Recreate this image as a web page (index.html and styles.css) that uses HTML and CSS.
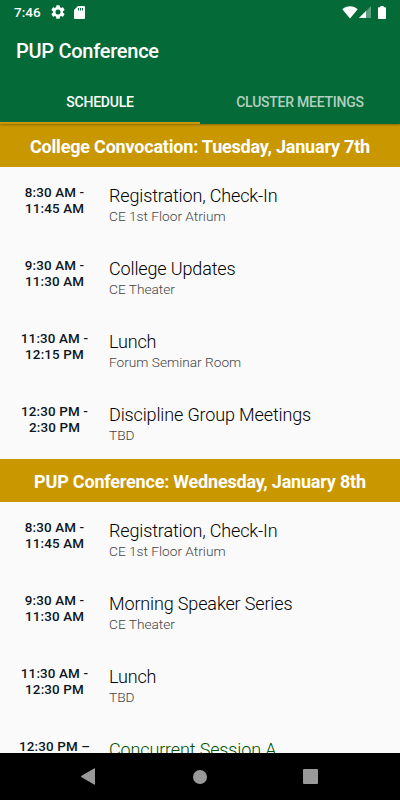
FILE: index.html
```html
<!DOCTYPE html>
<html lang="en">
<head>
    <meta charset="UTF-8">
    <meta name="viewport" content="width=device-width, initial-scale=1.0">
    <title>PUP Conference</title>
    <link rel="stylesheet" href="styles.css">
</head>
<body>

<header class="app-bar">
    <div class="status-bar">
        <span class="clock">7:46</span>
        <svg class="icon-gear" width="14" height="14" viewBox="2 2 20 20">
            <path fill="#fff" d="M19.14 12.94c.04-.3.06-.61.06-.94s-.02-.64-.07-.94l2.03-1.58a.49.49 0 0 0 .12-.61l-1.92-3.32a.49.49 0 0 0-.59-.22l-2.39.96a7 7 0 0 0-1.62-.94l-.36-2.54a.48.48 0 0 0-.48-.41h-3.84a.48.48 0 0 0-.47.41l-.36 2.54c-.59.24-1.13.57-1.62.94l-2.39-.96a.48.48 0 0 0-.59.22L2.74 8.87a.48.48 0 0 0 .12.61l2.03 1.58c-.05.3-.09.63-.09.94s.02.64.07.94l-2.03 1.58a.49.49 0 0 0-.12.61l1.92 3.32c.12.22.37.29.59.22l2.39-.96c.5.38 1.03.7 1.62.94l.36 2.54c.05.24.24.41.48.41h3.84c.24 0 .44-.17.47-.41l.36-2.54a7 7 0 0 0 1.62-.94l2.39.96c.22.08.47 0 .59-.22l1.92-3.32a.48.48 0 0 0-.12-.61zM12 15.6a3.6 3.6 0 1 1 0-7.2 3.6 3.6 0 0 1 0 7.2z"/>
        </svg>
        <svg class="icon-card" width="11" height="13" viewBox="0 0 11 13">
            <path fill="#fff" d="M4 0h6a1 1 0 0 1 1 1v11a1 1 0 0 1-1 1H1a1 1 0 0 1-1-1V4z"/>
            <path stroke="#046a38" stroke-width="1" d="M4.5 2v2.5M6.5 2v2.5M8.5 2v2.5"/>
        </svg>
        <div class="status-right">
            <svg class="icon-wifi" width="16" height="13" viewBox="0 0 16 13">
                <path fill="#fff" d="M8 12.6L.3 3.2C2.4 1.4 5 .3 8 .3s5.6 1.1 7.7 2.9z"/>
            </svg>
            <svg class="icon-signal" width="12" height="12" viewBox="0 0 12 12">
                <path fill="#fff" fill-opacity=".35" d="M0 12L12 0v12z"/>
                <path fill="#fff" d="M0 12l7-7v7z"/>
            </svg>
            <svg class="icon-battery" width="8" height="13" viewBox="0 0 8 13">
                <path fill="#fff" d="M2.3 0h3.4v1.2h1.6q.7 0 .7.7v10.4q0 .7-.7.7H.7q-.7 0-.7-.7V1.9q0-.7.7-.7h1.6z"/>
            </svg>
        </div>
    </div>
    <h1 class="app-title">PUP Conference</h1>
    <nav class="tabs">
        <div class="tab active">SCHEDULE</div>
        <div class="tab">CLUSTER MEETINGS</div>
    </nav>
</header>

<main class="schedule">
    <h2 class="day">College Convocation: Tuesday, January 7th</h2>
    <div class="event">
        <div class="time">8:30 AM -<br>11:45 AM</div>
        <div class="details">
            <div class="name">Registration, Check-In</div>
            <div class="place">CE 1st Floor Atrium</div>
        </div>
    </div>
    <div class="event">
        <div class="time">9:30 AM -<br>11:30 AM</div>
        <div class="details">
            <div class="name">College Updates</div>
            <div class="place">CE Theater</div>
        </div>
    </div>
    <div class="event">
        <div class="time">11:30 AM -<br>12:15 PM</div>
        <div class="details">
            <div class="name">Lunch</div>
            <div class="place">Forum Seminar Room</div>
        </div>
    </div>
    <div class="event">
        <div class="time">12:30 PM -<br>2:30 PM</div>
        <div class="details">
            <div class="name">Discipline Group Meetings</div>
            <div class="place">TBD</div>
        </div>
    </div>

    <h2 class="day">PUP Conference: Wednesday, January 8th</h2>
    <div class="event">
        <div class="time">8:30 AM -<br>11:45 AM</div>
        <div class="details">
            <div class="name">Registration, Check-In</div>
            <div class="place">CE 1st Floor Atrium</div>
        </div>
    </div>
    <div class="event">
        <div class="time">9:30 AM -<br>11:30 AM</div>
        <div class="details">
            <div class="name">Morning Speaker Series</div>
            <div class="place">CE Theater</div>
        </div>
    </div>
    <div class="event">
        <div class="time">11:30 AM -<br>12:30 PM</div>
        <div class="details">
            <div class="name">Lunch</div>
            <div class="place">TBD</div>
        </div>
    </div>
    <div class="event">
        <div class="time">12:30 PM –</div>
        <div class="details">
            <div class="name link">Concurrent Session A</div>
        </div>
    </div>
</main>

<footer class="nav-bar">
    <svg width="14" height="17" viewBox="0 0 14 17">
        <path fill="#999" d="M13 .4q1-.5 1 .6v15q0 1.1-1 .5L.6 9.2q-1-.7 0-1.4z"/>
    </svg>
    <svg width="14" height="14" viewBox="0 0 14 14">
        <circle cx="7" cy="7" r="7" fill="#999"/>
    </svg>
    <svg class="icon-recents" width="15" height="15" viewBox="0 0 15 15">
        <rect width="15" height="15" rx="1" fill="#999"/>
    </svg>
</footer>

</body>
</html>
```

FILE: styles.css
```css
body {
    font-family: Roboto, sans-serif;
    background-color: #fafafa;
    margin: 0;
    display: flex;
    flex-direction: column;
    height: 100vh;
    overflow: hidden;
}

.app-bar {
    background-color: #046a38;
    color: #fff;
    height: 124px;
    flex: none;
    display: flex;
    flex-direction: column;
    z-index: 1;
    box-shadow: 0 1px 2px rgba(0, 0, 0, 0.3);
}

.status-bar {
    display: flex;
    align-items: center;
    flex: none;
    height: 24px;
    padding: 0 14px;
    box-sizing: border-box;
}

.clock {
    font-size: 13.5px;
    font-weight: 500;
    width: 37px;
}

.icon-card {
    margin-left: 9px;
}

.status-right {
    display: flex;
    align-items: center;
    margin-left: auto;
}

.icon-signal {
    margin-left: 1px;
}

.icon-battery {
    margin-left: 7px;
}

.app-title {
    margin: 0;
    padding-left: 16px;
    flex: none;
    font-size: 20px;
    font-weight: 500;
    line-height: 55px;
    letter-spacing: -0.27px;
}

.tabs {
    display: flex;
    flex: 1;
    min-height: 0;
}

.tab {
    flex: 1;
    box-sizing: border-box;
    border-bottom: 2px solid transparent;
    text-align: center;
    font-size: 14px;
    font-weight: 500;
    line-height: 46px;
    letter-spacing: -0.24px;
    color: rgba(255, 255, 255, 0.7);
}

.tab.active {
    color: #fff;
    border-bottom-color: #c99700;
}

.schedule {
    flex: 1;
    min-height: 0;
    overflow: hidden;
}

.day {
    margin: 0;
    height: 43px;
    line-height: 45px;
    background-color: #c99700;
    color: #fff;
    text-align: center;
    font-size: 18px;
    font-weight: 700;
    letter-spacing: -0.2px;
}

.event {
    display: flex;
    height: 73px;
    box-sizing: border-box;
    padding-top: 18px;
}

.time {
    width: 109px;
    text-align: center;
    font-size: 13.4px;
    font-weight: 500;
    line-height: 16px;
    letter-spacing: 0.15px;
    color: #0c1520;
}

.name {
    font-size: 18px;
    font-weight: 300;
    line-height: 21px;
    letter-spacing: -0.14px;
    color: #000;
}

.name.link {
    color: #005000;
}

.place {
    font-size: 13.7px;
    font-weight: 300;
    line-height: 20px;
    color: #444;
}

.nav-bar {
    display: flex;
    justify-content: center;
    align-items: center;
    gap: 98px;
    flex: none;
    height: 47px;
    padding-right: 1px;
    background-color: #000;
}

.icon-recents {
    margin-left: -2px;
}
```
